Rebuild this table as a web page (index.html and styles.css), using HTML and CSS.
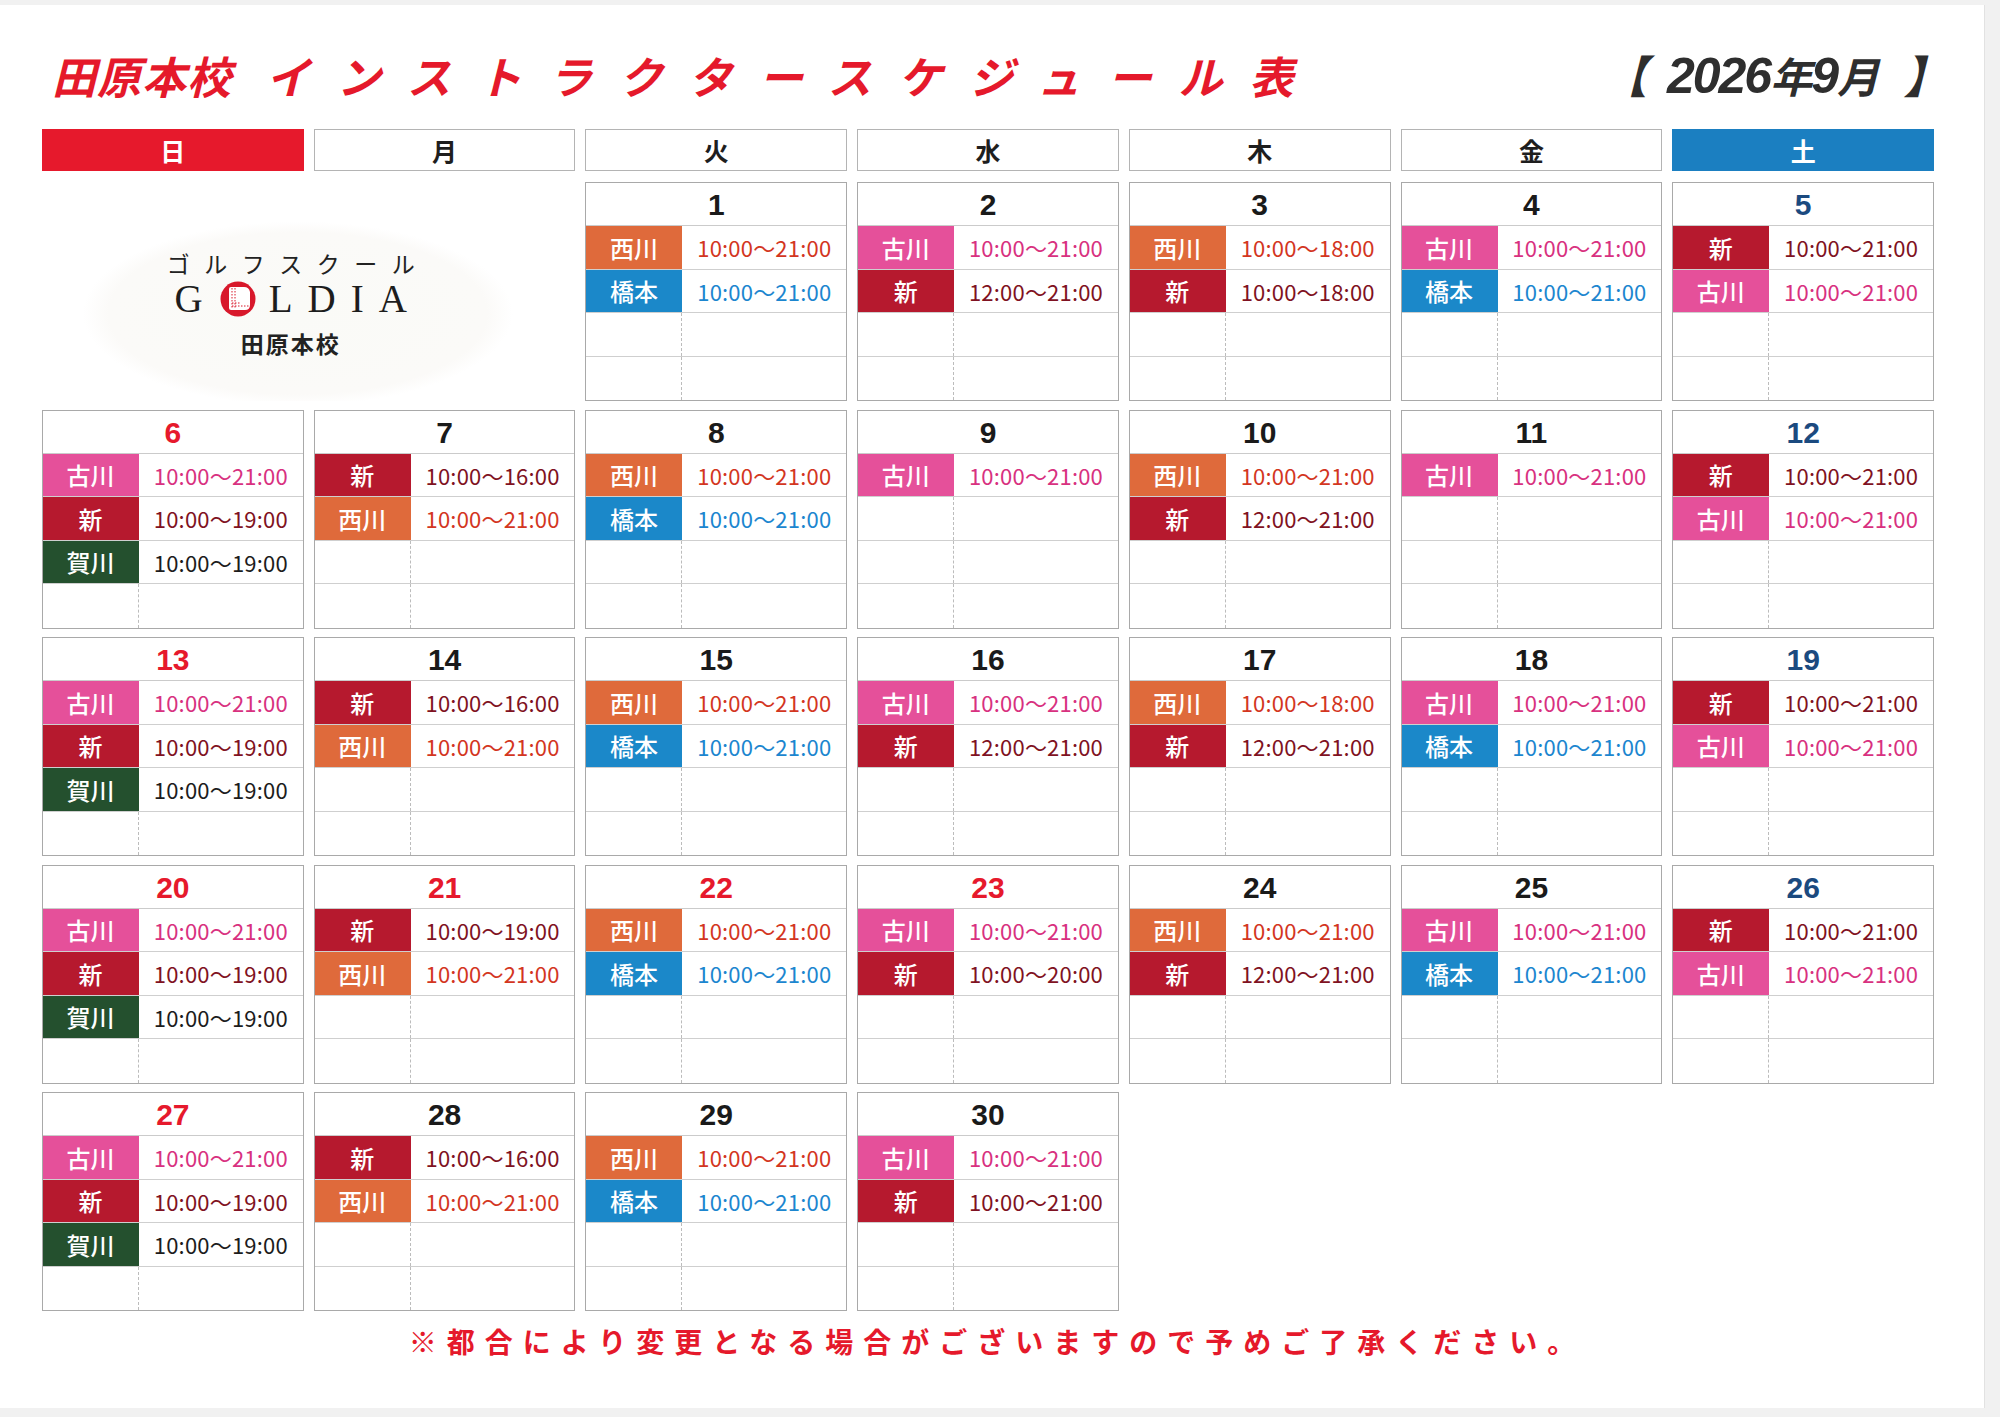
FILE: index.html
```html
<!DOCTYPE html>
<html lang="ja">
<head>
<meta charset="utf-8">
<title>田原本校 インストラクタースケジュール表</title>
<link rel="stylesheet" href="styles.css">
</head>
<body>
<div class="paper">
<div class="sheet">
  <header class="title-row">
    <h1 class="title"><span class="t1">田原本校</span><span class="t2">インストラクタースケジュール表</span></h1>
    <div class="month"><span class="br br-l">【</span><span class="num">2026</span><span class="jp">年</span><span class="num">9</span><span class="jp">月</span><span class="br br-r">】</span></div>
  </header>

  <div class="week-head">
    <div class="wd sun">日</div>
    <div class="wd">月</div>
    <div class="wd">火</div>
    <div class="wd">水</div>
    <div class="wd">木</div>
    <div class="wd">金</div>
    <div class="wd sat">土</div>
  </div>

  <div class="cal">
    <div class="logo">
      <div class="logo-kana">ゴルフスクール</div>
      <div class="logo-word"><span class="lw">G</span><svg class="ball" viewBox="0 0 36 36" width="36" height="36"><circle cx="18" cy="18" r="17.5" fill="#d8182b"/><path d="M9 8 Q9 6 11 6 H24 Q29 6 30 11 V24 Q30 29 25 29 H11 Q9 29 9 27 Z" fill="#fff"/><path d="M12 7 V28 M15 7 V28 M12 25 H29 M12 22 H20" stroke="#d8182b" stroke-width="1" stroke-dasharray="1.5 1.5" fill="none"/></svg><span class="lw">LDIA</span></div>
      <div class="logo-branch">田原本校</div>
    </div>

    <div class="day"><div class="date">1</div>
      <div class="row"><span class="nm nishi">西川</span><span class="tm nishi">10:00～21:00</span></div>
      <div class="row"><span class="nm hashi">橋本</span><span class="tm hashi">10:00～21:00</span></div>
      <div class="row"><span class="nm"></span><span class="tm"></span></div>
      <div class="row"><span class="nm"></span><span class="tm"></span></div>
    </div>
    <div class="day"><div class="date">2</div>
      <div class="row"><span class="nm furu">古川</span><span class="tm furu">10:00～21:00</span></div>
      <div class="row"><span class="nm shin">新</span><span class="tm shin">12:00～21:00</span></div>
      <div class="row"><span class="nm"></span><span class="tm"></span></div>
      <div class="row"><span class="nm"></span><span class="tm"></span></div>
    </div>
    <div class="day"><div class="date">3</div>
      <div class="row"><span class="nm nishi">西川</span><span class="tm nishi">10:00～18:00</span></div>
      <div class="row"><span class="nm shin">新</span><span class="tm shin">10:00～18:00</span></div>
      <div class="row"><span class="nm"></span><span class="tm"></span></div>
      <div class="row"><span class="nm"></span><span class="tm"></span></div>
    </div>
    <div class="day"><div class="date">4</div>
      <div class="row"><span class="nm furu">古川</span><span class="tm furu">10:00～21:00</span></div>
      <div class="row"><span class="nm hashi">橋本</span><span class="tm hashi">10:00～21:00</span></div>
      <div class="row"><span class="nm"></span><span class="tm"></span></div>
      <div class="row"><span class="nm"></span><span class="tm"></span></div>
    </div>
    <div class="day"><div class="date sat">5</div>
      <div class="row"><span class="nm shin">新</span><span class="tm shin">10:00～21:00</span></div>
      <div class="row"><span class="nm furu">古川</span><span class="tm furu">10:00～21:00</span></div>
      <div class="row"><span class="nm"></span><span class="tm"></span></div>
      <div class="row"><span class="nm"></span><span class="tm"></span></div>
    </div>

    <div class="day"><div class="date sun">6</div>
      <div class="row"><span class="nm furu">古川</span><span class="tm furu">10:00～21:00</span></div>
      <div class="row"><span class="nm shin">新</span><span class="tm shin">10:00～19:00</span></div>
      <div class="row"><span class="nm ga">賀川</span><span class="tm ga">10:00～19:00</span></div>
      <div class="row"><span class="nm"></span><span class="tm"></span></div>
    </div>
    <div class="day"><div class="date">7</div>
      <div class="row"><span class="nm shin">新</span><span class="tm shin">10:00～16:00</span></div>
      <div class="row"><span class="nm nishi">西川</span><span class="tm nishi">10:00～21:00</span></div>
      <div class="row"><span class="nm"></span><span class="tm"></span></div>
      <div class="row"><span class="nm"></span><span class="tm"></span></div>
    </div>
    <div class="day"><div class="date">8</div>
      <div class="row"><span class="nm nishi">西川</span><span class="tm nishi">10:00～21:00</span></div>
      <div class="row"><span class="nm hashi">橋本</span><span class="tm hashi">10:00～21:00</span></div>
      <div class="row"><span class="nm"></span><span class="tm"></span></div>
      <div class="row"><span class="nm"></span><span class="tm"></span></div>
    </div>
    <div class="day"><div class="date">9</div>
      <div class="row"><span class="nm furu">古川</span><span class="tm furu">10:00～21:00</span></div>
      <div class="row"><span class="nm"></span><span class="tm"></span></div>
      <div class="row"><span class="nm"></span><span class="tm"></span></div>
      <div class="row"><span class="nm"></span><span class="tm"></span></div>
    </div>
    <div class="day"><div class="date">10</div>
      <div class="row"><span class="nm nishi">西川</span><span class="tm nishi">10:00～21:00</span></div>
      <div class="row"><span class="nm shin">新</span><span class="tm shin">12:00～21:00</span></div>
      <div class="row"><span class="nm"></span><span class="tm"></span></div>
      <div class="row"><span class="nm"></span><span class="tm"></span></div>
    </div>
    <div class="day"><div class="date">11</div>
      <div class="row"><span class="nm furu">古川</span><span class="tm furu">10:00～21:00</span></div>
      <div class="row"><span class="nm"></span><span class="tm"></span></div>
      <div class="row"><span class="nm"></span><span class="tm"></span></div>
      <div class="row"><span class="nm"></span><span class="tm"></span></div>
    </div>
    <div class="day"><div class="date sat">12</div>
      <div class="row"><span class="nm shin">新</span><span class="tm shin">10:00～21:00</span></div>
      <div class="row"><span class="nm furu">古川</span><span class="tm furu">10:00～21:00</span></div>
      <div class="row"><span class="nm"></span><span class="tm"></span></div>
      <div class="row"><span class="nm"></span><span class="tm"></span></div>
    </div>

    <div class="day"><div class="date sun">13</div>
      <div class="row"><span class="nm furu">古川</span><span class="tm furu">10:00～21:00</span></div>
      <div class="row"><span class="nm shin">新</span><span class="tm shin">10:00～19:00</span></div>
      <div class="row"><span class="nm ga">賀川</span><span class="tm ga">10:00～19:00</span></div>
      <div class="row"><span class="nm"></span><span class="tm"></span></div>
    </div>
    <div class="day"><div class="date">14</div>
      <div class="row"><span class="nm shin">新</span><span class="tm shin">10:00～16:00</span></div>
      <div class="row"><span class="nm nishi">西川</span><span class="tm nishi">10:00～21:00</span></div>
      <div class="row"><span class="nm"></span><span class="tm"></span></div>
      <div class="row"><span class="nm"></span><span class="tm"></span></div>
    </div>
    <div class="day"><div class="date">15</div>
      <div class="row"><span class="nm nishi">西川</span><span class="tm nishi">10:00～21:00</span></div>
      <div class="row"><span class="nm hashi">橋本</span><span class="tm hashi">10:00～21:00</span></div>
      <div class="row"><span class="nm"></span><span class="tm"></span></div>
      <div class="row"><span class="nm"></span><span class="tm"></span></div>
    </div>
    <div class="day"><div class="date">16</div>
      <div class="row"><span class="nm furu">古川</span><span class="tm furu">10:00～21:00</span></div>
      <div class="row"><span class="nm shin">新</span><span class="tm shin">12:00～21:00</span></div>
      <div class="row"><span class="nm"></span><span class="tm"></span></div>
      <div class="row"><span class="nm"></span><span class="tm"></span></div>
    </div>
    <div class="day"><div class="date">17</div>
      <div class="row"><span class="nm nishi">西川</span><span class="tm nishi">10:00～18:00</span></div>
      <div class="row"><span class="nm shin">新</span><span class="tm shin">12:00～21:00</span></div>
      <div class="row"><span class="nm"></span><span class="tm"></span></div>
      <div class="row"><span class="nm"></span><span class="tm"></span></div>
    </div>
    <div class="day"><div class="date">18</div>
      <div class="row"><span class="nm furu">古川</span><span class="tm furu">10:00～21:00</span></div>
      <div class="row"><span class="nm hashi">橋本</span><span class="tm hashi">10:00～21:00</span></div>
      <div class="row"><span class="nm"></span><span class="tm"></span></div>
      <div class="row"><span class="nm"></span><span class="tm"></span></div>
    </div>
    <div class="day"><div class="date sat">19</div>
      <div class="row"><span class="nm shin">新</span><span class="tm shin">10:00～21:00</span></div>
      <div class="row"><span class="nm furu">古川</span><span class="tm furu">10:00～21:00</span></div>
      <div class="row"><span class="nm"></span><span class="tm"></span></div>
      <div class="row"><span class="nm"></span><span class="tm"></span></div>
    </div>

    <div class="day"><div class="date sun">20</div>
      <div class="row"><span class="nm furu">古川</span><span class="tm furu">10:00～21:00</span></div>
      <div class="row"><span class="nm shin">新</span><span class="tm shin">10:00～19:00</span></div>
      <div class="row"><span class="nm ga">賀川</span><span class="tm ga">10:00～19:00</span></div>
      <div class="row"><span class="nm"></span><span class="tm"></span></div>
    </div>
    <div class="day"><div class="date sun">21</div>
      <div class="row"><span class="nm shin">新</span><span class="tm shin">10:00～19:00</span></div>
      <div class="row"><span class="nm nishi">西川</span><span class="tm nishi">10:00～21:00</span></div>
      <div class="row"><span class="nm"></span><span class="tm"></span></div>
      <div class="row"><span class="nm"></span><span class="tm"></span></div>
    </div>
    <div class="day"><div class="date sun">22</div>
      <div class="row"><span class="nm nishi">西川</span><span class="tm nishi">10:00～21:00</span></div>
      <div class="row"><span class="nm hashi">橋本</span><span class="tm hashi">10:00～21:00</span></div>
      <div class="row"><span class="nm"></span><span class="tm"></span></div>
      <div class="row"><span class="nm"></span><span class="tm"></span></div>
    </div>
    <div class="day"><div class="date sun">23</div>
      <div class="row"><span class="nm furu">古川</span><span class="tm furu">10:00～21:00</span></div>
      <div class="row"><span class="nm shin">新</span><span class="tm shin">10:00～20:00</span></div>
      <div class="row"><span class="nm"></span><span class="tm"></span></div>
      <div class="row"><span class="nm"></span><span class="tm"></span></div>
    </div>
    <div class="day"><div class="date">24</div>
      <div class="row"><span class="nm nishi">西川</span><span class="tm nishi">10:00～21:00</span></div>
      <div class="row"><span class="nm shin">新</span><span class="tm shin">12:00～21:00</span></div>
      <div class="row"><span class="nm"></span><span class="tm"></span></div>
      <div class="row"><span class="nm"></span><span class="tm"></span></div>
    </div>
    <div class="day"><div class="date">25</div>
      <div class="row"><span class="nm furu">古川</span><span class="tm furu">10:00～21:00</span></div>
      <div class="row"><span class="nm hashi">橋本</span><span class="tm hashi">10:00～21:00</span></div>
      <div class="row"><span class="nm"></span><span class="tm"></span></div>
      <div class="row"><span class="nm"></span><span class="tm"></span></div>
    </div>
    <div class="day"><div class="date sat">26</div>
      <div class="row"><span class="nm shin">新</span><span class="tm shin">10:00～21:00</span></div>
      <div class="row"><span class="nm furu">古川</span><span class="tm furu">10:00～21:00</span></div>
      <div class="row"><span class="nm"></span><span class="tm"></span></div>
      <div class="row"><span class="nm"></span><span class="tm"></span></div>
    </div>

    <div class="day"><div class="date sun">27</div>
      <div class="row"><span class="nm furu">古川</span><span class="tm furu">10:00～21:00</span></div>
      <div class="row"><span class="nm shin">新</span><span class="tm shin">10:00～19:00</span></div>
      <div class="row"><span class="nm ga">賀川</span><span class="tm ga">10:00～19:00</span></div>
      <div class="row"><span class="nm"></span><span class="tm"></span></div>
    </div>
    <div class="day"><div class="date">28</div>
      <div class="row"><span class="nm shin">新</span><span class="tm shin">10:00～16:00</span></div>
      <div class="row"><span class="nm nishi">西川</span><span class="tm nishi">10:00～21:00</span></div>
      <div class="row"><span class="nm"></span><span class="tm"></span></div>
      <div class="row"><span class="nm"></span><span class="tm"></span></div>
    </div>
    <div class="day"><div class="date">29</div>
      <div class="row"><span class="nm nishi">西川</span><span class="tm nishi">10:00～21:00</span></div>
      <div class="row"><span class="nm hashi">橋本</span><span class="tm hashi">10:00～21:00</span></div>
      <div class="row"><span class="nm"></span><span class="tm"></span></div>
      <div class="row"><span class="nm"></span><span class="tm"></span></div>
    </div>
    <div class="day"><div class="date">30</div>
      <div class="row"><span class="nm furu">古川</span><span class="tm furu">10:00～21:00</span></div>
      <div class="row"><span class="nm shin">新</span><span class="tm shin">10:00～21:00</span></div>
      <div class="row"><span class="nm"></span><span class="tm"></span></div>
      <div class="row"><span class="nm"></span><span class="tm"></span></div>
    </div>
  </div>

  <p class="note">※都合により変更となる場合がございますので予めご了承ください。</p>
</div>
</div>
</body>
</html>
```

FILE: styles.css
```css
html, body {
  margin: 0;
  padding: 0;
}
body {
  background: #f1f1f1;
  width: 2000px;
  height: 1417px;
  overflow: hidden;
  font-family: "Noto Sans CJK JP", "Noto Sans", sans-serif;
}
.paper {
  margin-top: 5px;
  width: 1984px;
  height: 1403px;
  background: #ffffff;
  border-right: 1px solid #e2e2e2;
  overflow: hidden;
}
.sheet {
  margin-left: 42px;
  width: 1892px;
  padding-top: 40px;
}

/* title */
.title-row {
  display: flex;
  justify-content: space-between;
  align-items: center;
  height: 60px;
  padding: 0 0 0 10px;
}
.title {
  margin: 0;
  font-family: "Noto Sans CJK JP", sans-serif;
  font-weight: 700;
  font-style: italic;
  font-size: 44px;
  line-height: 60px;
  color: #e5192b;
  white-space: nowrap;
}
.title .t1 {
  letter-spacing: 1px;
  margin-right: 34px;
}
.title .t2 {
  letter-spacing: 26.8px;
}
.month {
  font-style: italic;
  font-weight: 700;
  color: #2e2e2e;
  white-space: nowrap;
  line-height: 60px;
  display: flex;
  align-items: baseline;
  margin-right: -14px;
}
.month .br {
  font-family: "Noto Sans CJK JP", sans-serif;
  font-size: 44px;
  font-weight: 900;
}
.month .br-l { margin-right: 20px; }
.month .br-r { margin-left: 26px; }
.month .num {
  font-family: "Liberation Sans", sans-serif;
  font-size: 50px;
  letter-spacing: -2px;
}
.month .jp {
  font-family: "Noto Sans CJK JP", sans-serif;
  font-size: 42px;
  letter-spacing: -1px;
}

/* weekday header */
.week-head {
  display: grid;
  grid-template-columns: repeat(7, 1fr);
  column-gap: 10px;
  margin-top: 24px;
}
.wd {
  height: 42px;
  box-sizing: border-box;
  border: 1px solid #b4b4b4;
  background: #fff;
  display: flex;
  align-items: center;
  justify-content: center;
  font-weight: 700;
  font-size: 25px;
  color: #1e1e1e;
}
.wd.sun {
  background: #e6192c;
  border-color: #e6192c;
  color: #fff;
}
.wd.sat {
  background: #1b7fc1;
  border-color: #1b7fc1;
  color: #fff;
}

/* calendar grid */
.cal {
  display: grid;
  grid-template-columns: repeat(7, 1fr);
  grid-auto-rows: 219px;
  column-gap: 10px;
  row-gap: 8.5px;
  margin-top: 11px;
}
.logo {
  grid-column: span 2;
  display: flex;
  flex-direction: column;
  align-items: center;
  justify-content: flex-start;
  padding: 69px 36px 0 0;
  box-sizing: border-box;
  background: radial-gradient(ellipse 215px 92px at 48% 60%, #fafaf7 0%, #fbfaf8 88%, rgba(255,255,255,0) 100%);
}
.logo-kana {
  font-size: 23px;
  font-weight: 400;
  letter-spacing: 14.5px;
  margin-right: -14.5px;
  color: #222;
  line-height: 24px;
}
.logo-word {
  margin-top: 5px;
  font-family: "Liberation Serif", serif;
  font-size: 39px;
  line-height: 38px;
  color: #1d1d1d;
  display: flex;
  align-items: center;
}
.logo-word .lw {
  letter-spacing: 15px;
}
.logo-word .lw:last-child {
  margin-right: -15px;
}
.ball {
  margin: 0 13px 0 2px;
}
.logo-branch {
  margin-top: 12px;
  font-weight: 700;
  font-size: 23px;
  letter-spacing: 2px;
  color: #222;
  line-height: 26px;
}

.day {
  display: grid;
  grid-template-rows: 43px repeat(4, 1fr);
  box-sizing: border-box;
  border: 1px solid #a9a9a9;
  background: #fff;
}
.date {
  font-family: "Liberation Sans", sans-serif;
  font-weight: 700;
  font-size: 30px;
  line-height: 43px;
  text-align: center;
  color: #1a1a1a;
  border-bottom: 1px solid #cbcbcb;
}
.date.sun { color: #e6192c; }
.date.sat { color: #1b4a7f; }

.row {
  display: grid;
  grid-template-columns: 96px 1fr;
  border-bottom: 1px solid #cfcfcf;
}
.row:last-child { border-bottom: none; }
.nm {
  display: flex;
  align-items: center;
  justify-content: center;
  font-size: 24px;
  font-weight: 500;
  color: #fff;
  border-right: 1px dashed #bcbcbc;
}
.tm {
  display: flex;
  align-items: center;
  justify-content: center;
  font-size: 22px;
  font-weight: 400;
  letter-spacing: 0.2px;
}
.nm.nishi { background: #df6a3b; border-right-color: #df6a3b; }
.nm.hashi { background: #1b88c9; border-right-color: #1b88c9; }
.nm.furu  { background: #e5509a; border-right-color: #e5509a; }
.nm.shin  { background: #b6192e; border-right-color: #b6192e; }
.nm.ga    { background: #24502e; border-right-color: #24502e; }
.tm.nishi { color: #d3361f; }
.tm.hashi { color: #1c86cf; }
.tm.furu  { color: #d8317f; }
.tm.shin  { color: #7f1222; }
.tm.ga    { color: #1c1c1c; }

.note {
  margin: 10px 0 0 0;
  padding-left: 18px;
  text-align: center;
  font-size: 28px;
  font-weight: 700;
  line-height: 40px;
  letter-spacing: 10px;
  color: #e5192b;
}
```
